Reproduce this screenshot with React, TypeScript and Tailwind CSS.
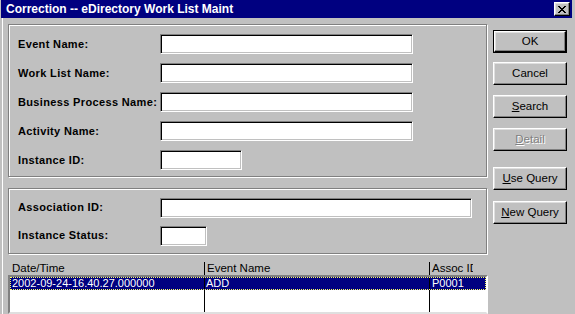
import React from "react";

const raised =
  "bg-[#c0c0c0] border border-t-white border-l-white border-r-black border-b-black shadow-[inset_-1px_-1px_0_#808080,inset_1px_1px_0_#dfdfdf]";
const sunken =
  "bg-white border border-t-[#808080] border-l-[#808080] border-r-white border-b-white shadow-[inset_1px_1px_0_#000,inset_-1px_-1px_0_#c0c0c0]";
const etched =
  "border border-[#808080] shadow-[inset_1px_1px_0_#fff,1px_1px_0_#fff]";

function Field({ label, width }: { label: string; width: string }) {
  return (
    <div className="flex items-center h-[20px]">
      <div className="w-[142px] shrink-0 font-bold whitespace-nowrap tracking-[0.35px]">{label}</div>
      <div className={`h-[20px] ${width} ${sunken}`} />
    </div>
  );
}

function Btn({
  children,
  size = "w-[74px] h-[23px]",
  className = "",
  disabled = false,
}: {
  children: React.ReactNode;
  size?: string;
  className?: string;
  disabled?: boolean;
}) {
  return (
    <div
      className={`${size} flex items-center justify-center text-[11.5px] ${raised} ${
        disabled ? "text-[#808080] [text-shadow:1px_1px_0_#fff]" : ""
      } ${className}`}
    >
      {children}
    </div>
  );
}

export default function App() {
  return (
    <div className="w-[575px] h-[314px] overflow-hidden bg-[#c0c0c0] text-black text-[11px] leading-[13px] font-['Liberation_Sans',Arial,sans-serif]">
      {/* title bar */}
      <div className="ml-[1px] mr-[3px] h-[18px] bg-[#000080] flex items-center pl-[5px] pr-[2px]">
        <span className="text-white font-bold text-[12px] flex-1">
          Correction -- eDirectory Work List Maint
        </span>
        <div className={`w-[16px] h-[14px] flex items-center justify-center ${raised}`}>
          <svg width="8" height="7" viewBox="0 0 8 7" shapeRendering="crispEdges">
            <path
              d="M0 0h2v1H0zM6 0h2v1H6zM1 1h2v1H1zM5 1h2v1H5zM2 2h4v1H2zM3 3h2v1H3zM2 4h4v1H2zM1 5h2v1H1zM5 5h2v1H5zM0 6h2v1H0zM6 6h2v1H6z"
              fill="#000"
            />
          </svg>
        </div>
      </div>

      <div className="flex pl-[2px] h-[296px]">
        <div className="border-l border-white flex flex-1 pl-[5px]">
          {/* left column */}
          <div className="w-[480px] pt-[6px] flex flex-col">
            <div className={`w-[479px] h-[155px] pt-[9px] pl-[9px] flex flex-col gap-[9px] ${etched}`}>
              <Field label="Event Name:" width="w-[253px]" />
              <Field label="Work List Name:" width="w-[253px]" />
              <Field label="Business Process Name:" width="w-[253px]" />
              <Field label="Activity Name:" width="w-[253px]" />
              <Field label="Instance ID:" width="w-[82px]" />
            </div>
            <div className={`mt-[11px] w-[479px] h-[67px] pt-[9px] pl-[9px] flex flex-col gap-[8px] ${etched}`}>
              <Field label="Association ID:" width="w-[312px]" />
              <Field label="Instance Status:" width="w-[47px]" />
            </div>

            {/* list header */}
            <div className="mt-[8px] h-[13px] flex whitespace-nowrap text-[11.5px]">
              <div className="w-[196px] pl-[4px]">Date/Time</div>
              <div className="w-[225px] border-l border-black pl-[2px]">Event Name</div>
              <div className="w-[44px] border-l border-black pl-[2px] overflow-hidden">Assoc ID</div>
            </div>

            {/* list */}
            <div className="w-[480px] h-[40px] border-2 border-t-[#808080] border-l-[#808080] border-r-white border-b-[#dfdfdf] bg-white flex flex-col">
              <div className="h-[13px] bg-[#000080] text-white border border-dotted border-[#ffff60] flex whitespace-nowrap leading-[11px]">
                <div className="w-[193px] pl-[1px]">2002-09-24-16.40.27.000000</div>
                <div className="w-[225px] border-l border-black pl-[1px]">ADD</div>
                <div className="flex-1 border-l border-black pl-[2px]">P0001</div>
              </div>
              <div className="flex-1 flex">
                <div className="w-[194px]" />
                <div className="w-[225px] border-l border-black" />
                <div className="flex-1 border-l border-black" />
              </div>
            </div>
          </div>

          {/* buttons */}
          <div className="ml-[5px] pt-[12px] flex flex-col">
            <div className="w-[74px] h-[23px] border border-black">
              <Btn size="w-[72px] h-[21px]">OK</Btn>
            </div>
            <Btn className="mt-[9px]">Cancel</Btn>
            <Btn className="mt-[10px]">
              <span>
                <span className="underline">S</span>earch
              </span>
            </Btn>
            <Btn className="mt-[10px]" disabled>
              <span>
                <span className="underline">D</span>etail
              </span>
            </Btn>
            <Btn className="mt-[16px]">
              <span>
                <span className="underline">U</span>se Query
              </span>
            </Btn>
            <Btn className="mt-[11px]">
              <span>
                <span className="underline">N</span>ew Query
              </span>
            </Btn>
          </div>
        </div>
        <div className="w-[2px]" />
      </div>
    </div>
  );
}
